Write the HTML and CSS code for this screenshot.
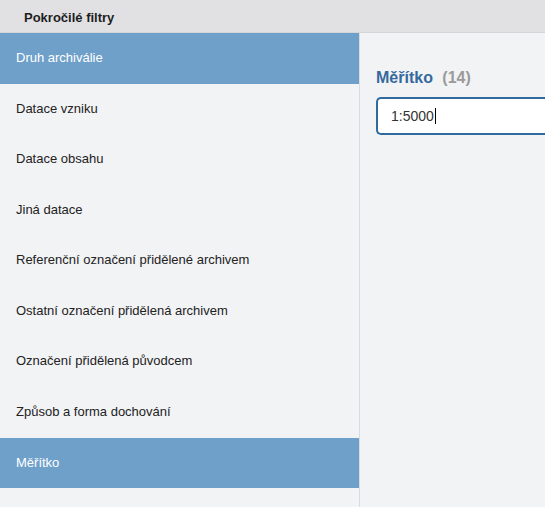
FILE: index.html
```html
<!DOCTYPE html>
<html lang="cs">
<head>
<meta charset="utf-8">
<link rel="stylesheet" href="styles.css">
</head>
<body>
<div class="app">
  <div class="header">Pokročilé filtry</div>
  <div class="main">
    <ul class="menu">
      <li class="item active">Druh archiválie</li>
      <li class="item">Datace vzniku</li>
      <li class="item">Datace obsahu</li>
      <li class="item">Jiná datace</li>
      <li class="item">Referenční označení přidělené archivem</li>
      <li class="item">Ostatní označení přidělená archivem</li>
      <li class="item">Označení přidělená původcem</li>
      <li class="item">Způsob a forma dochování</li>
      <li class="item active">Měřítko</li>
    </ul>
    <div class="panel">
      <h2 class="panel-title">Měřítko <span class="count">(14)</span></h2>
      <div class="input">1:5000<span class="caret"></span></div>
    </div>
  </div>
</div>
</body>
</html>
```
FILE: styles.css
```css
html, body {
  margin: 0;
  padding: 0;
  height: 100%;
  overflow: hidden;
}
body {
  font-family: "Liberation Sans", Arial, sans-serif;
  font-size: 13px;
  color: #333;
  background: #f2f3f5;
}
.app {
  display: flex;
  flex-direction: column;
  height: 100%;
}
.header {
  height: 33px;
  box-sizing: border-box;
  padding: 9px 0 0 24px;
  background: #e1e1e3;
  border-bottom: 1px solid #d4d5d8;
  font-weight: bold;
  font-size: 13px;
  color: #1e1e1e;
  line-height: 17px;
}
.main {
  flex: 1;
  display: flex;
}
.menu {
  list-style: none;
  margin: 0;
  padding: 0;
  width: 359px;
  border-right: 1px solid #d9dde3;
  background: #f2f3f5;
}
.item {
  padding: 16px;
  line-height: 18.57px;
  color: #222;
}
.item.active {
  background: #6fa0ca;
  color: #fff;
}
.panel {
  flex: 1;
  padding: 34px 0 0 16px;
  overflow: hidden;
}
.panel-title {
  margin: 0 0 8px;
  font-size: 16px;
  line-height: 22px;
  color: #35699d;
  font-weight: bold;
}
.count {
  color: #9a9a9a;
  margin-left: 5px;
}
.input {
  box-sizing: border-box;
  height: 38px;
  width: 200px;
  border: 2px solid #2f6aa0;
  border-right: none;
  border-radius: 5px 0 0 5px;
  background: #fff;
  padding: 0 0 0 13px;
  font-size: 14px;
  line-height: 34px;
  color: #333;
  display: flex;
  align-items: center;
}
.caret {
  display: inline-block;
  width: 1px;
  height: 16px;
  background: #000;
  margin-left: 1px;
}
```
